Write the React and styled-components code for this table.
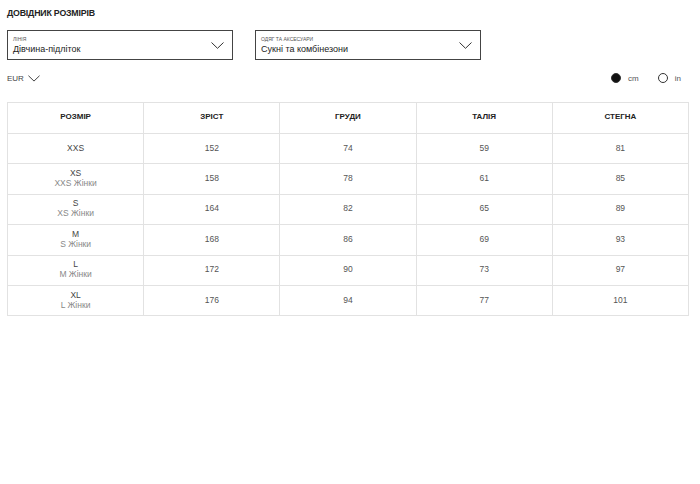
import React from "react";
import styled, { createGlobalStyle } from "styled-components";

const GlobalStyle = createGlobalStyle`
  html, body {
    margin: 0;
    padding: 0;
    background: #fff;
  }
  body {
    font-family: "Liberation Sans", Arial, sans-serif;
    color: #222;
  }
`;

const rows = [
  { size: "XXS", alt: null, values: [152, 74, 59, 81] },
  { size: "XS", alt: "XXS Жінки", values: [158, 78, 61, 85] },
  { size: "S", alt: "XS Жінки", values: [164, 82, 65, 89] },
  { size: "M", alt: "S Жінки", values: [168, 86, 69, 93] },
  { size: "L", alt: "M Жінки", values: [172, 90, 73, 97] },
  { size: "XL", alt: "L Жінки", values: [176, 94, 77, 101] },
];

const headers = ["РОЗМІР", "ЗРІСТ", "ГРУДИ", "ТАЛІЯ", "СТЕГНА"];

function Chevron({ w = 13, h = 7 }) {
  return (
    <svg width={w} height={h} viewBox="0 0 13 7" fill="none">
      <path d="M0.5 0.5 L6.5 6.3 L12.5 0.5" stroke="#333" strokeWidth="1" />
    </svg>
  );
}

export default function App() {
  return (
    <Page>
      <GlobalStyle />
      <Title>ДОВІДНИК РОЗМІРІВ</Title>
      <Selects>
        <Select>
          <SelectText>
            <SelectLabel>ЛІНІЯ</SelectLabel>
            <SelectValue>Дівчина-підліток</SelectValue>
          </SelectText>
          <Chevron />
        </Select>
        <Select>
          <SelectText>
            <SelectLabel>ОДЯГ ТА АКСЕСУАРИ</SelectLabel>
            <SelectValue>Сукні та комбінезони</SelectValue>
          </SelectText>
          <Chevron />
        </Select>
      </Selects>
      <Toolbar>
        <Currency>
          EUR
          <Chevron w={12} h={7} />
        </Currency>
        <Units>
          <Unit>
            <Radio $checked />
            cm
          </Unit>
          <Unit>
            <Radio />
            in
          </Unit>
        </Units>
      </Toolbar>
      <Table>
        <thead>
          <tr>
            {headers.map((h) => (
              <Th key={h}>{h}</Th>
            ))}
          </tr>
        </thead>
        <tbody>
          {rows.map((r) => (
            <tr key={r.size}>
              <Td>
                <SizeMain>{r.size}</SizeMain>
                {r.alt && <SizeAlt>{r.alt}</SizeAlt>}
              </Td>
              {r.values.map((v, i) => (
                <Td key={i}>{v}</Td>
              ))}
            </tr>
          ))}
        </tbody>
      </Table>
    </Page>
  );
}

const Page = styled.div`
  padding: 8px 11px 0 7px;
`;

const Title = styled.h1`
  margin: 0;
  font-size: 8.8px;
  font-weight: 700;
  letter-spacing: -0.2px;
  line-height: 10px;
  color: #222;
`;

const Selects = styled.div`
  display: flex;
  gap: 22px;
  margin-top: 12px;
`;

const Select = styled.div`
  width: 226px;
  height: 30px;
  box-sizing: border-box;
  border: 1px solid #444;
  display: flex;
  align-items: center;
  justify-content: space-between;
  padding: 0 8px 0 5px;
`;

const SelectText = styled.div`
  display: flex;
  flex-direction: column;
  gap: 2px;
`;

const SelectLabel = styled.span`
  font-size: 5px;
  line-height: 6px;
  color: #555;
  margin-top: 1px;
`;

const SelectValue = styled.span`
  font-size: 9px;
  line-height: 11px;
  color: #222;
`;

const Toolbar = styled.div`
  display: flex;
  justify-content: space-between;
  align-items: center;
  margin-top: 12px;
  height: 12px;
`;

const Currency = styled.div`
  display: flex;
  align-items: center;
  gap: 4px;
  font-size: 8px;
  color: #444;
`;

const Units = styled.div`
  display: flex;
  gap: 19px;
  padding-right: 8px;
`;

const Unit = styled.label`
  display: flex;
  align-items: center;
  gap: 7px;
  font-size: 8px;
  color: #555;
`;

const Radio = styled.span`
  width: 10px;
  height: 10px;
  box-sizing: border-box;
  border-radius: 50%;
  border: 1px solid #333;
  background: ${(p) => (p.$checked ? "#111" : "#fff")};
`;

const Table = styled.table`
  margin-top: 18px;
  width: 682px;
  border-collapse: collapse;
  table-layout: fixed;
`;

const Th = styled.th`
  height: 31px;
  box-sizing: border-box;
  border: 1px solid #e2e2e2;
  font-size: 8px;
  font-weight: 700;
  color: #222;
  text-align: center;
  vertical-align: middle;
  padding: 0 0 3px;
`;

const Td = styled.td`
  height: 30.4px;
  box-sizing: border-box;
  border: 1px solid #e2e2e2;
  font-size: 8.5px;
  color: #555;
  text-align: center;
  vertical-align: middle;
  padding: 0 0 2px;
`;

const SizeMain = styled.div`
  line-height: 10px;
  color: #444;
`;

const SizeAlt = styled.div`
  line-height: 10px;
  color: #888;
`;
